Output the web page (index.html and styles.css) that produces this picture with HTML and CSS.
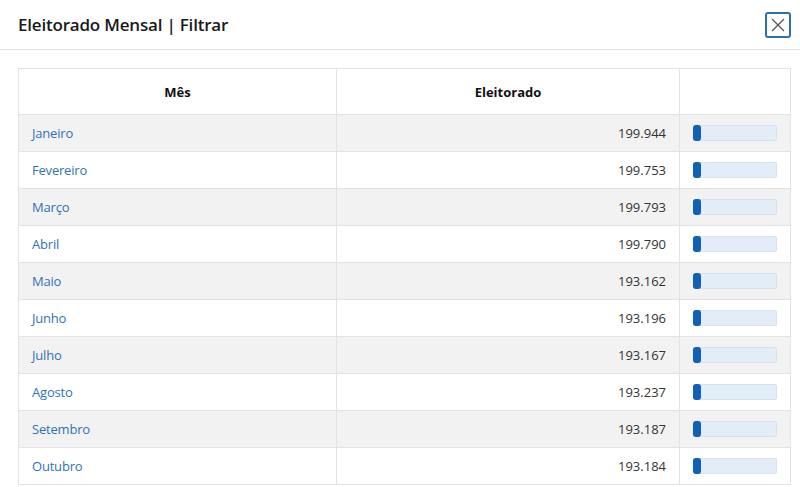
FILE: index.html
```html
<!DOCTYPE html>
<html lang="pt">
<head>
<meta charset="utf-8">
<link rel="stylesheet" href="styles.css">
</head>
<body>
<div class="modal">
  <header class="modal-header">
    <h1 class="title">Eleitorado Mensal | Filtrar</h1>
    <button class="close" aria-label="Fechar">
      <svg width="14" height="14" viewBox="0 0 14 14"><path d="M1 1L13 13M13 1L1 13" stroke="#555" stroke-width="1.3" fill="none"/></svg>
    </button>
  </header>
  <div class="modal-body">
    <table class="grid">
      <thead>
        <tr><th class="c1">Mês</th><th class="c2">Eleitorado</th><th class="c3"></th></tr>
      </thead>
      <tbody>
        <tr><td><a>Janeiro</a></td><td class="num">199.944</td><td><div class="bar"><div class="fill"></div></div></td></tr>
        <tr><td><a>Fevereiro</a></td><td class="num">199.753</td><td><div class="bar"><div class="fill"></div></div></td></tr>
        <tr><td><a>Março</a></td><td class="num">199.793</td><td><div class="bar"><div class="fill"></div></div></td></tr>
        <tr><td><a>Abril</a></td><td class="num">199.790</td><td><div class="bar"><div class="fill"></div></div></td></tr>
        <tr><td><a>Maio</a></td><td class="num">193.162</td><td><div class="bar"><div class="fill"></div></div></td></tr>
        <tr><td><a>Junho</a></td><td class="num">193.196</td><td><div class="bar"><div class="fill"></div></div></td></tr>
        <tr><td><a>Julho</a></td><td class="num">193.167</td><td><div class="bar"><div class="fill"></div></div></td></tr>
        <tr><td><a>Agosto</a></td><td class="num">193.237</td><td><div class="bar"><div class="fill"></div></div></td></tr>
        <tr><td><a>Setembro</a></td><td class="num">193.187</td><td><div class="bar"><div class="fill"></div></div></td></tr>
        <tr><td><a>Outubro</a></td><td class="num">193.184</td><td><div class="bar"><div class="fill"></div></div></td></tr>
      </tbody>
    </table>
  </div>
</div>
</body>
</html>
```
FILE: styles.css
```css
* { box-sizing: border-box; }
html, body { margin: 0; padding: 0; background: #fff; }
body { font-family: "Open Sans", "Noto Sans", sans-serif; color: #222; width: 800px; height: 487px; overflow: hidden; }
.modal-header {
  height: 50px;
  border-bottom: 1px solid #e6e6e6;
  display: flex;
  align-items: center;
  justify-content: space-between;
  padding: 0 9px 0 18px;
}
.title { margin: 0; font-size: 17px; font-weight: 600; color: #1a1a1a; letter-spacing: -0.2px; }
.close {
  width: 26px; height: 26px;
  border: 2px solid #2f6fb0;
  border-radius: 3px;
  background: #fff;
  display: flex; align-items: center; justify-content: center;
  padding: 0;
  margin-top: 1px;
}
.modal-body { padding: 18px 9px 0 18px; }
.grid { border-collapse: collapse; width: 773px; font-size: 13px; border: 1px solid #e3e3e3; }
.grid th, .grid td { border: 1px solid #e3e3e3; }
.grid th { height: 46px; font-weight: 700; font-size: 13px; color: #111; }
.c1 { width: 318px; }
.c2 { width: 343px; }
.grid td { height: 37px; padding: 0 13px; }
.grid tbody tr:nth-child(odd) td { background: #f2f2f2; }
.grid a { color: #2f73b7; letter-spacing: -0.2px; }
.num { text-align: right; color: #333; }
.bar {
  width: 84px; height: 16px;
  background: #e3edf8;
  border: 1px solid #d5e2f0;
  border-radius: 2px;
  position: relative;
}
.fill {
  position: absolute; left: -1px; top: -1px; bottom: -1px;
  width: 8px; background: #1160b8; border-radius: 3px;
}
```
